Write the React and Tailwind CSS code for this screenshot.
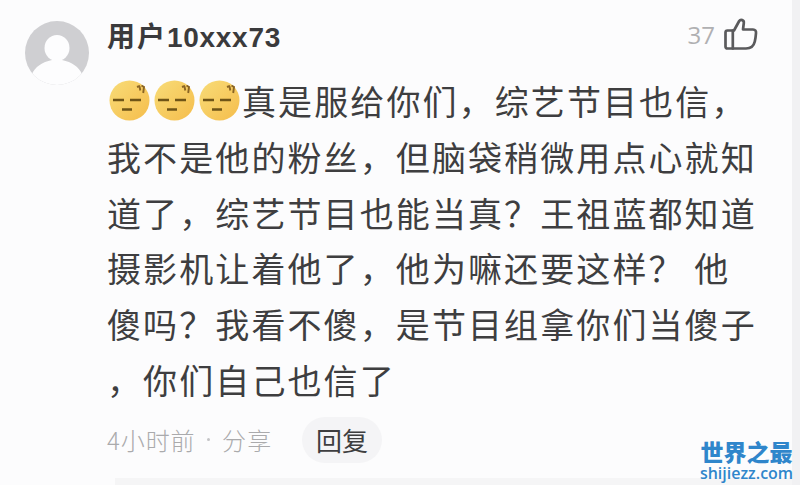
import React from 'react';

const commentLines = [
  '真是服给你们，综艺节目也信，',
  '我不是他的粉丝，但脑袋稍微用点心就知',
  '道了，综艺节目也能当真？王祖蓝都知道',
  '摄影机让着他了，他为嘛还要这样？ 他',
  '傻吗？我看不傻，是节目组拿你们当傻子',
  '，你们自己也信了',
];

const Avatar = () => (
  <svg className="h-[66px] w-[66px] shrink-0" viewBox="0 0 66 66">
    <defs>
      <clipPath id="avatarClip">
        <circle cx="33" cy="33" r="32" />
      </clipPath>
    </defs>
    <circle cx="33" cy="33" r="32" fill="#cfcfd2" />
    <g clipPath="url(#avatarClip)" fill="#fdfdfe">
      <ellipse cx="33" cy="28" rx="12.5" ry="13" />
      <path d="M28 36h10v4c10 2 17 7 20 14v12H8V54c3-7 10-12 20-14z" />
    </g>
  </svg>
);

const Emoji = () => (
  <svg className="h-[41px] w-[41px]" viewBox="0 0 41 41">
    <defs>
      <linearGradient id="face" x1="0" y1="0" x2="1" y2="1">
        <stop offset="0" stopColor="#f8dc78" />
        <stop offset="1" stopColor="#f5bd4c" />
      </linearGradient>
    </defs>
    <circle cx="20.5" cy="20.5" r="20" fill="url(#face)" />
    <g fill="none" stroke="#6f5417" strokeWidth="2.6">
      <path d="M4 20h11M21 20h11M13 29.500h10" />
      <path d="M28 7l3-1.200M30.500 6.500l.8 4M32.500 5.500l2.500 1.500-.8 6" stroke="#8a6424" strokeWidth="1.9" />
    </g>
  </svg>
);

const ThumbIcon = () => (
  <svg
    className="h-9 w-9"
    viewBox="0 0 36 36"
    fill="none"
    stroke="#5a5a5c"
    strokeWidth="2.7"
    strokeLinejoin="round"
    strokeLinecap="round"
  >
    <path d="M4.500 13.500H11l5.200-9.500c1.400-2 5-1 4.600 2L20 12.500h10c2.300 0 3.200 1.600 3 3.500-.2 3-.4 5-1.200 8.500-1 4.500-4.300 7-8.800 7H4.500c-1.300 0-2-.7-2-2v-14c0-1.300.7-2 2-2z" />
    <path d="M9.800 13.500v18" />
  </svg>
);

const App = () => {
  return (
    <div className="relative flex h-[485px] w-[800px] overflow-hidden bg-[#fcfcfd] font-['Liberation_Sans','Noto_Sans_CJK_SC',sans-serif] text-[#3e3e40]">
      <div className="flex w-[792px] flex-col">
        <div className="flex flex-1 pl-[24px]">
          <div className="pt-5">
            <Avatar />
          </div>

          <div className="ml-[17px] flex-1">
            {/* User name and likes */}
            <div className="flex h-[73px] items-center justify-between pr-[33px]">
              <span className="pt-0.5 text-[28px] font-bold text-[#3a3a3c]">
                <span className="tracking-[2px]">用户</span>
                <span className="tracking-[0.7px]">10xxx73</span>
              </span>
              <div className="flex items-center gap-2 pb-1">
                <span className="font-['Open_Sans',sans-serif] text-[24px] text-[#b0b0b2]">37</span>
                <ThumbIcon />
              </div>
            </div>

            {/* Comment text */}
            <div className="font-['Noto_Sans_CJK_SC',sans-serif] text-[34px] leading-[55.8px] tracking-[2.1px]">
              {commentLines.map((line, index) => (
                <div key={index} className="flex h-[55.8px] items-center whitespace-pre">
                  {index === 0 && (
                    <div className="mr-0.5 flex gap-1 pl-0.5">
                      <Emoji />
                      <Emoji />
                      <Emoji />
                    </div>
                  )}
                  <span>{line}</span>
                </div>
              ))}
            </div>

            {/* Time, share and reply */}
            <div className="mt-[9px] flex h-[46px] items-center font-['Noto_Sans_CJK_SC',sans-serif]">
              <div className="flex w-[195px] items-center text-[24px] font-light text-[#aaaaac]">
                <span className="w-[91px] tracking-[0.9px]">4小时前</span>
                <span className="mr-[12px] ml-[9px] size-[3px] rounded-full bg-[#c4c4c6]" />
                <span className="tracking-[1.2px]">分享</span>
              </div>
              <button className="h-[46px] w-[80px] rounded-full bg-[#f4f4f6] text-[26px] text-[#3e3e40]">回复</button>
            </div>
          </div>
        </div>
        <div className="ml-[115px] h-[7px] bg-[#f5f5f6]" />
      </div>
      <div className="flex-1 bg-[#f1f1f3]" />

      {/* Site mark */}
      <div className="absolute top-[438px] left-[700px] flex w-[93px] flex-col items-center text-[#2f86cb]">
        <span className="font-['Noto_Sans_CJK_SC',sans-serif] text-[23px] leading-[27px] font-black whitespace-nowrap">世界之最</span>
        <span className="font-['Open_Sans',sans-serif] text-[16px] leading-[17px] font-semibold">shijiezz.com</span>
      </div>
    </div>
  );
};

export default App;
